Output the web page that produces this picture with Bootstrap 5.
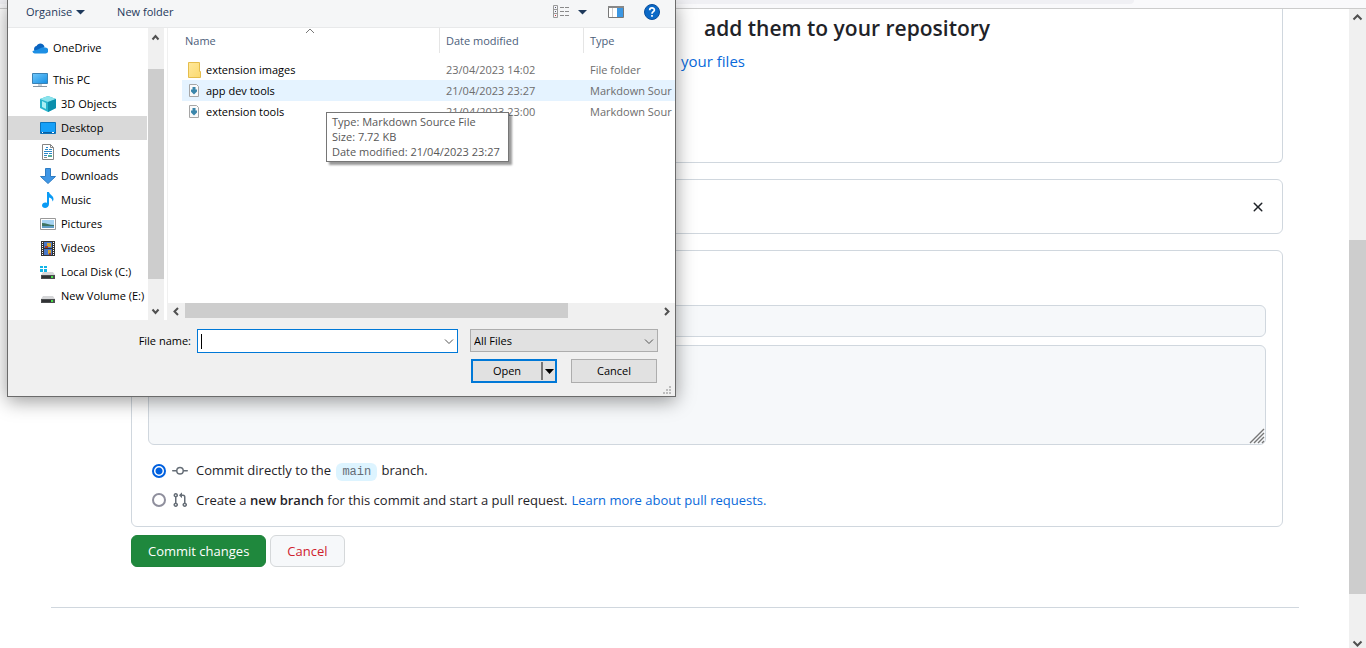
<!DOCTYPE html>
<html lang="en">
<head>
<meta charset="utf-8">
<meta name="viewport" content="width=device-width, initial-scale=1">
<title>Upload files</title>
<link href="https://cdn.jsdelivr.net/npm/bootstrap@5.3.0/dist/css/bootstrap.min.css" rel="stylesheet">
<script src="https://cdn.jsdelivr.net/npm/bootstrap@5.3.0/dist/js/bootstrap.bundle.min.js"></script>
<style>
  body { font-family: "Open Sans", "Noto Sans", sans-serif; font-size: 13px; line-height: 20px; color: #1f2328; }
  svg { display: block; flex: none; }
  a { color: #0969da; text-decoration: none; }

  /* browser chrome */
  .browser-bar { height: 9px; background: #f9f9fb; border-bottom: 1px solid #ccc; flex: none; }
  .url-bar { height: 4px; width: 83%; background: #f0f0f4; border-radius: 0 0 4px 0; }
  .sb { background: #f0f0f0; flex: none; }
  .sb-page { width: 17px; }
  .sb-side { width: 16px; }
  .sb-end { width: 17px; height: 17px; flex: none; }
  .sb-side .sb-end { width: 16px; }
  .sb-run { padding-bottom: 2px; }
  .thumb { background: #cdcdcd; }

  /* repository page */
  .page { padding: 0 50px 0 51px; }
  .upload { margin: 0 16px 0 80px; }
  .panel { border: 1px solid #d0d7de; border-radius: 6px; }
  .panel-drop { height: 154px; border-top: 0; border-radius: 0 0 6px 6px; padding-left: 549px; }
  .panel-drop h1 { font-size: 21px; font-weight: 600; line-height: 38px; margin: 0; padding-left: 23px; }
  .panel-drop p { font-size: 15px; line-height: 24px; margin: 2px 0 0; }
  .panel-file { height: 55px; margin-top: 16px; padding: 1px 16px 0; }
  .panel-commit { margin-top: 16px; padding: 54px 16px 12px; }
  .field { border: 1px solid #d0d7de; border-radius: 6px; background: #f6f8fa; }
  .field-title { height: 32px; }
  .field-text { height: 100px; resize: none; }
  .grip { position: absolute; right: 1px; bottom: 1px; }
  .choices { margin-top: 11px; }
  .choice { height: 29px; padding-left: 4px; }
  .choice input { width: 14px; height: 14px; margin: 0; flex: none; appearance: none; border: 2px solid #8f8f9d; border-radius: 50%; background: #fff; }
  .choice input:checked { border-color: #0060df; background: radial-gradient(circle, #0060df 3px, #fff 4px); }
  .choice svg { margin: 0 8px 0 6px; fill: #656d76; }
  .branch { font: 12px/18px "Liberation Mono", monospace; color: #656d76; background: #ddf4ff; border-radius: 6px; padding: 2px 6px; margin: 0 1px 0 2px; }
  .gh-btn { height: 32px; font-size: 13px; line-height: 20px; padding: 5px 16px; border-radius: 6px; }
  .gh-green { background: #1f883d; border-color: #1f833b; color: #fff; }
  .gh-plain { background: #f6f8fa; border-color: #d5d8da; color: #cf222e; }
  .foot-line { margin: 40px 0 0; border-top: 1px solid #d0d7de; opacity: 1; }

  /* file picker window */
  .picker { position: absolute; left: 7px; top: 0; width: 669px; background: #f0f0f0; border: 1px solid #6b6b6b; border-top: 0; box-shadow: 0 4px 18px rgba(0,0,0,.4); font-size: 11px; line-height: 16px; color: #000; }
  .picker button { font-size: 11px; line-height: 16px; }
  .tools { height: 28px; padding: 0 15px 3px 18px; background: #f5f6f7; border-bottom: 1px solid #e8e9ea; }
  .tools button { background: none; border: 0; padding: 0; color: #1e395b; }
  .side { flex: none; width: 140px; padding-top: 8px; background: #fff; }
  .side a { height: 24px; padding-left: 32px; color: #000; white-space: nowrap; gap: 5px; }
  .side .top-level { padding-left: 24px; }
  .side .picked { background: #d9d9d9; width: 139px; }
  .files { margin-left: 3px; border-left: 1px solid #f0f0f0; background: #fff; min-width: 0; }
  .files-body { height: 275px; padding-left: 14px; }
  .files table { table-layout: fixed; width: 100%; border-collapse: collapse; }
  .files th { height: 31px; padding: 0; font-weight: 400; color: #4c607a; vertical-align: top; }
  .files th div { height: 25px; padding: 5px 0 0 6px; border-left: 1px solid #e5e5e5; }
  .files th:first-child div { border: 0; padding-left: 3px; }
  .files td { height: 21px; padding: 0 0 0 7px; white-space: nowrap; color: #6d6d6d; }
  .files td:first-child { padding-left: 5px; color: #000; }
  .files .hot { background: #e5f3ff; }
  .sort { position: absolute; left: 297px; top: 28px; }
  .tip { position: absolute; left: 318px; top: 112px; width: 183px; padding: 1px 5px 2px; background: #fff; border: 1px solid #767676; box-shadow: 3px 3px 2px rgba(0,0,0,.4); line-height: 15px; color: #575757; white-space: nowrap; }
  .actions { padding: 9px 17px 13px; }
  .name-row { gap: 12px; }
  .name-row label { padding: 4px 6px 0 0; }
  .name-box { width: 261px; }
  .name-box input { display: block; width: 100%; height: 24px; border: 1px solid #0078d7; background: #fff; padding: 0 20px 0 6px; outline: 0; }
  .caret { position: absolute; left: 4px; top: 5px; width: 1px; height: 15px; background: #000; }
  .chev { position: absolute; right: 4px; top: 9px; pointer-events: none; }
  .type-box { width: 188px; }
  .type-box select { display: block; width: 100%; height: 23px; border: 1px solid #adadad; background: #e1e1e1; appearance: none; padding: 0 3px; color: #000; }
  .open-row { margin-top: 6px; gap: 14px; padding-right: 1px; }
  .open-group { width: 86px; height: 24px; border: 2px solid #0078d7; background: #e1e1e1; }
  .open-group button { border: 0; background: none; padding: 0; }
  .open-group .open-more { width: 14px; height: 18px; border-left: 2px solid #777; }
  .dismiss { width: 86px; height: 24px; border: 1px solid #adadad; background: #e1e1e1; padding: 0; }
  .size-grip { position: absolute; right: 3px; bottom: 1px; }
</style>
</head>
<body class="vh-100 d-flex flex-column overflow-hidden position-relative">
<svg width="0" height="0" class="position-absolute" aria-hidden="true">
  <defs>
    <g id="md">
      <path d="M2.500 1.500h7l2 2v10h-9z" fill="#fafafa" stroke="#a6a6a6"/>
      <path d="M5.500 4h3v2.500H10v2L7 11.500l-3-3v-2h1.500z" fill="#3b86ab"/>
    </g>
    <g id="disk">
      <path d="M3 8h10l2 3H1z" fill="#d5d6d8"/><path d="M1 11h14v4H1z" fill="#4b4d4f"/><path d="M2 12h11v2H2z" fill="#303234"/><path d="M11 12h2v2h-2z" fill="#48e048"/>
    </g>
    <linearGradient id="blue" x2="1" y2="1"><stop stop-color="#70c8fb"/><stop offset="1" stop-color="#168fe3"/></linearGradient>
    <linearGradient id="yellow" x2="1" y2="1"><stop stop-color="#ffe89b"/><stop offset="1" stop-color="#fbd96f"/></linearGradient>
  </defs>
</svg>

<div class="browser-bar"><div class="url-bar"></div></div>
<div class="d-flex flex-grow-1 overflow-hidden">
  <main class="page flex-grow-1">
    <form class="upload" onsubmit="return false">
      <section class="panel panel-drop">
        <h1>add them to your repository</h1>
        <p><a href="#">your files</a></p>
      </section>
      <section class="panel panel-file d-flex align-items-center justify-content-end">
        <button type="button" class="btn p-0 border-0" aria-label="Remove file">
          <svg width="16" height="16" viewBox="0 0 16 16" fill="#1f2328"><path d="M3.720 3.720a.75.75 0 0 1 1.060 0L8 6.940l3.220-3.220a.75.75 0 1 1 1.060 1.060L9.060 8l3.220 3.220a.75.75 0 1 1-1.060 1.060L8 9.060l-3.220 3.220a.75.75 0 0 1-1.060-1.060L6.940 8 3.720 4.780a.75.75 0 0 1 0-1.060Z"/></svg>
        </button>
      </section>
      <section class="panel panel-commit">
        <input class="field field-title w-100 d-block" type="text" aria-label="Commit title">
        <div class="position-relative mt-2">
          <textarea class="field field-text w-100 d-block" aria-label="Commit description"></textarea>
          <svg class="grip" width="16" height="16" stroke="#777" stroke-width="1.400"><path d="M1 15 15 1M5 15 15 5M9 15l6-6M13 15l2-2"/></svg>
        </div>
        <div class="choices">
          <div class="choice d-flex align-items-center">
            <input type="radio" name="target" id="direct" checked>
            <svg width="16" height="16" viewBox="0 0 16 16"><path d="M11.930 8.500a4.002 4.002 0 0 1-7.860 0H.75a.75.75 0 0 1 0-1.500h3.320a4.002 4.002 0 0 1 7.860 0h3.320a.75.75 0 0 1 0 1.500Zm-1.430-.75a2.500 2.500 0 1 0-5 0 2.500 2.500 0 0 0 5 0Z"/></svg>
            <label for="direct">Commit directly to the <span class="branch">main</span> branch.</label>
          </div>
          <div class="choice d-flex align-items-center">
            <input type="radio" name="target" id="pull">
            <svg width="16" height="16" viewBox="0 0 16 16"><path d="M1.500 3.250a2.250 2.250 0 1 1 3 2.122v5.256a2.251 2.251 0 1 1-1.500 0V5.372A2.250 2.250 0 0 1 1.500 3.250Zm5.677-.177L9.573.677A.25.25 0 0 1 10 .854V2.500h1A2.500 2.500 0 0 1 13.500 5v5.628a2.251 2.251 0 1 1-1.500 0V5a1 1 0 0 0-1-1h-1v1.646a.25.25 0 0 1-.427.177L7.177 3.427a.25.25 0 0 1 0-.354ZM3.750 2.500a.75.75 0 1 0 0 1.500.75.75 0 0 0 0-1.500Zm0 9.500a.75.75 0 1 0 0 1.500.75.75 0 0 0 0-1.500Zm8.250.75a.75.75 0 1 0 1.500 0 .75.75 0 0 0-1.500 0Z"/></svg>
            <label for="pull">Create a <span class="fw-semibold">new branch</span> for this commit and start a pull request.</label>
            <a href="#" class="ms-1">Learn more about pull requests.</a>
          </div>
        </div>
      </section>
      <div class="d-flex gap-1 mt-2">
        <button type="submit" class="btn gh-btn gh-green">Commit changes</button>
        <button type="button" class="btn gh-btn gh-plain">Cancel</button>
      </div>
    </form>
    <hr class="foot-line">
  </main>
  <div class="sb sb-page d-flex flex-column" aria-hidden="true">
    <svg class="sb-end" viewBox="0 0 17 17" fill="none" stroke="#505050" stroke-width="2"><path d="m4.500 10.500 4-4 4 4"/></svg>
    <div style="flex:214"></div><div class="thumb" style="flex:354"></div><div style="flex:37"></div>
    <svg class="sb-end" viewBox="0 0 17 17" fill="none" stroke="#505050" stroke-width="2"><path d="m4.500 10.500 4 4 4-4"/></svg>
  </div>
</div>

<div class="picker" role="dialog" aria-label="File upload">
  <div class="tools d-flex align-items-center">
    <button type="button" class="d-flex align-items-center">Organise <svg class="ms-1" width="9" height="6"><path d="M0 1h9L4.500 5.500z" fill="#1e395b"/></svg></button>
    <button type="button" class="ms-4 ps-2">New folder</button>
    <button type="button" class="ms-auto d-flex align-items-center" aria-label="Change view">
      <svg width="17" height="14" fill="none"><path d="M.5.5h4v12h-4zM.5 4.500h4M.5 8.500h4" stroke="#9a9a9a"/><path d="M7 2.500h4m1 0h4M7 6.500h4m1 0h4M7 10.500h4m1 0h4" stroke="#8a8a8a"/><path d="M2 2h1v1H2zM2 6h1v1H2z" fill="#557"/><path d="M2 10h1v1H2z" fill="#c33"/></svg>
      <svg class="ms-2" width="9" height="6"><path d="M0 1h9L4.500 5.500z" fill="#1e395b"/></svg>
    </button>
    <button type="button" class="ms-3 ps-1" aria-label="Preview pane"><svg width="17" height="12"><path d="M1.500.5h15v11h-15z" fill="#fff" stroke="#777"/><path d="M1 0h16v2H1z" fill="#888"/><path d="M5.500 2v9" stroke="#ccc"/><path d="M10 2h6v9h-6z" fill="#3b97e3"/></svg></button>
    <button type="button" class="ms-3 ps-1" aria-label="Help"><svg width="16" height="16"><circle cx="8" cy="8" r="7.500" fill="#0b69c7" stroke="#0b4f9c"/><path d="M5.700 6.200C5.700 3.200 10.400 3.300 10.400 6 10.400 7.700 8 7.700 8 9.700M8 11v1.800" fill="none" stroke="#fff" stroke-width="1.700"/></svg></button>
  </div>

  <div class="d-flex bg-white">
    <nav class="side">
      <a href="#" class="d-flex align-items-center top-level mb-2"><svg width="16" height="16"><path d="M3.500 12C1 10 2 6.500 4.500 6 6 2.500 11 2.500 12.500 6.500L9 11z" fill="#0a64c0"/><path d="M3 13.500h10.500a2.900 2.900 0 0 0-.5-6C10.500 6.500 8.500 8 6 9.500L.5 11c0 1.500 1 2.500 2.500 2.500z" fill="#1d8fe4"/></svg>OneDrive</a>
      <a href="#" class="d-flex align-items-center top-level"><svg width="16" height="16"><path d="M.5 1.500h15v10H.5z" fill="url(#blue)" stroke="#3b82b4"/><path d="M6 12h4v2H6z" fill="#c8d0d6"/><path d="M1 14.500h14" stroke="#8795a1"/></svg>This PC</a>
      <a href="#" class="d-flex align-items-center"><svg width="16" height="16"><path d="m8 0 8 3v9l-8 4-8-4V3z" fill="#27b5cd"/><path d="m8 0 8 3-8 3-8-3z" fill="#8be3ec"/><path d="M8 6v10l8-4V3z" fill="#0b8fac"/><path d="m2 5 4 2v6l-4-2z" fill="#a9f0f4"/></svg>3D Objects</a>
      <a href="#" class="d-flex align-items-center picked"><svg width="16" height="16"><path d="M.5 2.500h15v11H.5z" fill="#16a0f8" stroke="#0c74bc"/><path d="M1 12.500h14" stroke="#0a5ea0"/><path d="M2 12.500h1m9 0h2" stroke="#fff"/></svg>Desktop</a>
      <a href="#" class="d-flex align-items-center"><svg width="16" height="16" fill="none"><path d="M2.500.500h8l3 3v12h-11z" fill="#fff" stroke="#858585"/><path d="M10.500.5v3h3" stroke="#858585"/><path d="M6 3.500h2M5 5.500h3m1 0h3M4 7.500h8M4 9.500h4m1 0h3M4 11.500h3" stroke="#2b88c8"/><path d="M8 11h4v2H8z" fill="#5a9"/><path d="M4 13.500h3" stroke="#888"/></svg>Documents</a>
      <a href="#" class="d-flex align-items-center"><svg width="16" height="16"><path d="M5.500.500h5v8h5L8 15.500.500 8.500h5z" fill="#3f97e6" stroke="#2d7cc4"/></svg>Downloads</a>
      <a href="#" class="d-flex align-items-center"><svg width="16" height="16"><path d="M7 0h2c.5 3 4.500 3.500 4.500 7 0 1-.5 2-1 2.500C12.500 7 11 6 9 5.500V12c0 5-7 5-7 1.500C2 11 5 10 7 11z" fill="#0a9bf5"/></svg>Music</a>
      <a href="#" class="d-flex align-items-center"><svg width="16" height="16"><path d="M.5 2.500h15v11H.5z" fill="#fff" stroke="#999"/><path d="M2 4h12v8H2z" fill="#a6d3f2"/><path d="M2 7c4 0 7 2 12 2v3H2z" fill="#3e7462"/><path d="M2 10h12v2H2z" fill="#5e9cc4"/></svg>Pictures</a>
      <a href="#" class="d-flex align-items-center"><svg width="16" height="16"><path d="M1 1h14v15H1z" fill="#333"/><path d="M4 2h8v6H4zM4 9h8v6H4z" fill="#4877c8"/><path d="M7 3h4v4H7zM8 10h3v4H8z" fill="#d6a32c"/><path d="M5 6h3v2H5zM9 13h2v2H9z" fill="#a33b2a"/><path d="M2.500 2v14M13.500 2v14" stroke="#fff" stroke-dasharray="1 1"/></svg>Videos</a>
      <a href="#" class="d-flex align-items-center"><svg width="16" height="16"><use href="#disk"/><path d="M0 2h3v2H0zM4 2h3v2H4zM0 5h3v3H0zM4 5h3v3H4z" fill="#12b5e8"/></svg>Local Disk (C:)</a>
      <a href="#" class="d-flex align-items-center"><svg width="16" height="16"><use href="#disk"/></svg>New Volume (E:)</a>
    </nav>
    <div class="sb sb-side d-flex flex-column" aria-hidden="true">
      <svg class="sb-end" viewBox="0 0 16 17" fill="none" stroke="#505050" stroke-width="2"><path d="m4.500 11.500 3-3.500 3 3.500"/></svg>
      <div style="flex:24"></div><div class="thumb" style="flex:210"></div><div style="flex:24"></div>
      <svg class="sb-end" viewBox="0 0 16 17" fill="none" stroke="#505050" stroke-width="2"><path d="m4.500 6.500 3 3.500 3-3.500"/></svg>
    </div>
    <div class="files flex-grow-1">
      <div class="files-body">
        <table>
          <colgroup><col style="width:257px"><col style="width:144px"><col></colgroup>
          <thead><tr><th scope="col"><div>Name</div></th><th scope="col"><div>Date modified</div></th><th scope="col"><div>Type</div></th></tr></thead>
          <tbody>
            <tr><td><span class="d-flex align-items-center gap-1"><svg width="15" height="16"><path d="M1.500.5h11v9h1v6h-12z" fill="url(#yellow)" stroke="#e5bd4c"/></svg>extension images</span></td><td>23/04/2023 14:02</td><td>File folder</td></tr>
            <tr class="hot"><td><span class="d-flex align-items-center gap-1"><svg width="15" height="16"><use href="#md"/></svg>app dev tools</span></td><td>21/04/2023 23:27</td><td>Markdown Sour</td></tr>
            <tr><td><span class="d-flex align-items-center gap-1"><svg width="15" height="16"><use href="#md"/></svg>extension tools</span></td><td>21/04/2023 23:00</td><td>Markdown Sour</td></tr>
          </tbody>
        </table>
      </div>
      <div class="sb d-flex" aria-hidden="true">
        <svg class="sb-end" viewBox="0 0 17 17" fill="none" stroke="#505050" stroke-width="2"><path d="M10 5 6.500 8.500 10 12"/></svg>
        <div class="d-flex flex-grow-1 sb-run"><div class="thumb" style="flex:383"></div><div style="flex:90"></div></div>
        <svg class="sb-end" viewBox="0 0 17 17" fill="none" stroke="#505050" stroke-width="2"><path d="m7 5 3.500 3.500L7 12"/></svg>
      </div>
    </div>
  </div>

  <div class="actions">
    <div class="d-flex align-items-start justify-content-end name-row">
      <div class="d-flex align-items-start">
        <label for="fname">File name:</label>
        <div class="name-box position-relative">
          <input type="text" id="fname"><span class="caret"></span>
          <svg class="chev" width="10" height="7" fill="none" stroke="#555"><path d="m1 1.500 4 4 4-4"/></svg>
        </div>
      </div>
      <div class="type-box position-relative">
        <select aria-label="File type"><option>All Files</option></select>
        <svg class="chev" width="10" height="7" fill="none" stroke="#555"><path d="m1 1.500 4 4 4-4"/></svg>
      </div>
    </div>
    <div class="d-flex justify-content-end open-row">
      <div class="open-group d-flex align-items-center">
        <button type="button" class="flex-grow-1">Open</button>
        <button type="button" class="open-more" aria-label="More open options"><svg class="mx-auto" width="9" height="5"><path d="M0 0h9L4.500 5z"/></svg></button>
      </div>
      <button type="button" class="dismiss">Cancel</button>
    </div>
  </div>

  <svg class="sort" width="10" height="6" fill="none" stroke="#777"><path d="m1 5 4-4 4 4"/></svg>
  <div class="tip" role="tooltip">Type: Markdown Source File<br>Size: 7.72 KB<br>Date modified: 21/04/2023 23:27</div>
  <svg class="size-grip" width="9" height="9" fill="#bdbdbd"><path d="M6 0h2v2H6zM3 3h2v2H3zM6 3h2v2H6zM0 6h2v2H0zM3 6h2v2H3zM6 6h2v2H6z"/></svg>
</div>
</body>
</html>
